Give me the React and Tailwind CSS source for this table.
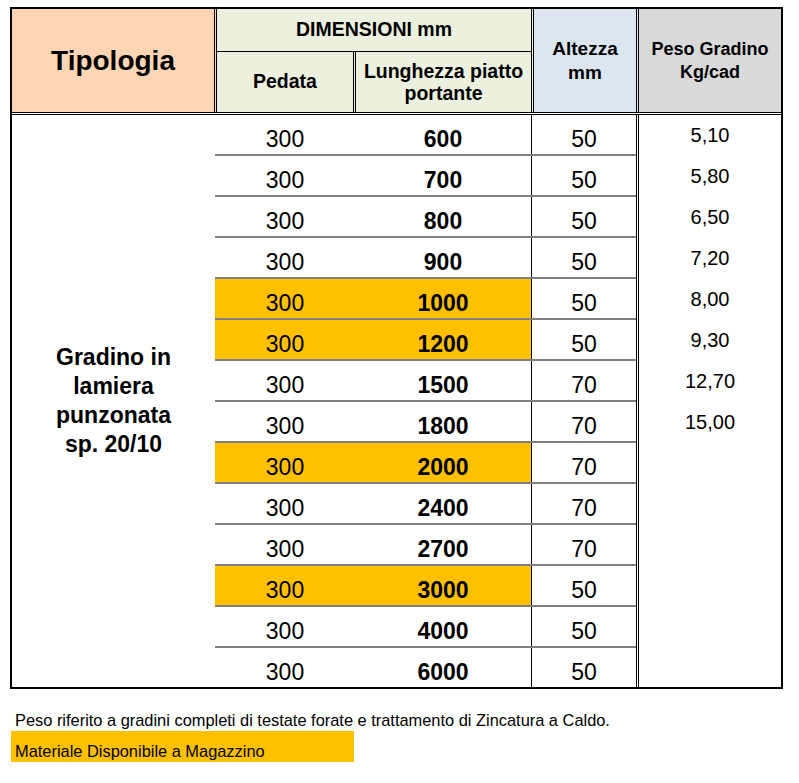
const rows = [
  { p: 300, l: 600, h: 50, hl: false },
  { p: 300, l: 700, h: 50, hl: false },
  { p: 300, l: 800, h: 50, hl: false },
  { p: 300, l: 900, h: 50, hl: false },
  { p: 300, l: 1000, h: 50, hl: true },
  { p: 300, l: 1200, h: 50, hl: true },
  { p: 300, l: 1500, h: 70, hl: false },
  { p: 300, l: 1800, h: 70, hl: false },
  { p: 300, l: 2000, h: 70, hl: true },
  { p: 300, l: 2400, h: 70, hl: false },
  { p: 300, l: 2700, h: 70, hl: false },
  { p: 300, l: 3000, h: 50, hl: true },
  { p: 300, l: 4000, h: 50, hl: false },
  { p: 300, l: 6000, h: 50, hl: false },
]

const pesi = ['5,10', '5,80', '6,50', '7,20', '8,00', '9,30', '12,70', '15,00']

export default function App() {
  return (
    <div className="min-h-[783px] bg-white text-black font-['Liberation_Sans',Arial,sans-serif]">
      {/* Tabella */}
      <div className="ml-[10px] pt-[7px]">
        <div className="w-[773px] border-2 border-black">
          {/* Intestazione */}
          <div className="flex h-[106px] border-b-[3px] border-double border-black">
            <div className="w-[205px] border-r-[3px] border-double border-black bg-[#fcd5b4] flex items-center justify-center text-[28px] font-bold">
              Tipologia
            </div>
            <div className="w-[317px] border-r-[3px] border-double border-black bg-[#ebf1de] flex flex-col">
              <div className="h-[43px] border-b border-black flex items-center justify-center text-[19.5px] font-bold">
                DIMENSIONI mm
              </div>
              <div className="flex flex-1">
                <div className="w-[139px] border-r-[3px] border-double border-black flex items-center justify-center text-[19.5px] font-bold">
                  Pedata
                </div>
                <div className="flex-1 flex items-center justify-center text-center text-[19.5px] font-bold leading-[22px]">
                  Lunghezza piatto
                  <br />
                  portante
                </div>
              </div>
            </div>
            <div className="w-[105px] border-r-[3px] border-double border-black bg-[#dce6f1] flex items-center justify-center text-center text-[19px] font-bold leading-[24px]">
              Altezza
              <br />
              mm
            </div>
            <div className="flex-1 bg-[#d9d9d9] flex items-center justify-center text-center text-[18px] font-bold leading-[23px]">
              Peso Gradino
              <br />
              Kg/cad
            </div>
          </div>

          {/* Corpo */}
          <div className="flex">
            <div className="w-[203px] flex items-center justify-center text-center text-[23px] font-bold leading-[29px]">
              Gradino in
              <br />
              lamiera
              <br />
              punzonata
              <br />
              sp. 20/10
            </div>
            <div className="w-[421px] flex flex-col">
              {rows.map((r, i) => (
                <div
                  key={i}
                  className={i < rows.length - 1 ? 'flex h-[41px] border-b-2 border-[#808080]' : 'flex h-[39px]'}
                >
                  <div className={r.hl ? 'w-[316px] flex bg-[#ffc000]' : 'w-[316px] flex'}>
                    <div className="w-[140px] flex items-end justify-center pb-[2px] text-[23px] leading-[25px]">
                      {r.p}
                    </div>
                    <div className="flex-1 flex items-end justify-center pb-[2px] text-[23px] leading-[25px] font-bold">
                      {r.l}
                    </div>
                  </div>
                  <div className="flex-1 border-l border-black flex items-end justify-center pb-[2px] text-[23px] leading-[25px]">
                    {r.h}
                  </div>
                </div>
              ))}
            </div>
            <div className="flex-1 border-l-[3px] border-double border-black text-center text-[20px] leading-[41px]">
              {pesi.map((p) => (
                <div key={p}>{p}</div>
              ))}
            </div>
          </div>
        </div>
      </div>

      {/* Note */}
      <div className="ml-[11px] mt-[22px] text-[16.4px] leading-[18px]">
        <p className="pl-[4px]">
          Peso riferito a gradini completi di testate forate e trattamento di Zincatura a Caldo.
        </p>
        <div className="mt-[2px] w-[343px] h-[31px] bg-[#ffc000] flex items-end pl-[4px] pb-[2px]">
          Materiale Disponibile a Magazzino
        </div>
      </div>
    </div>
  )
}
